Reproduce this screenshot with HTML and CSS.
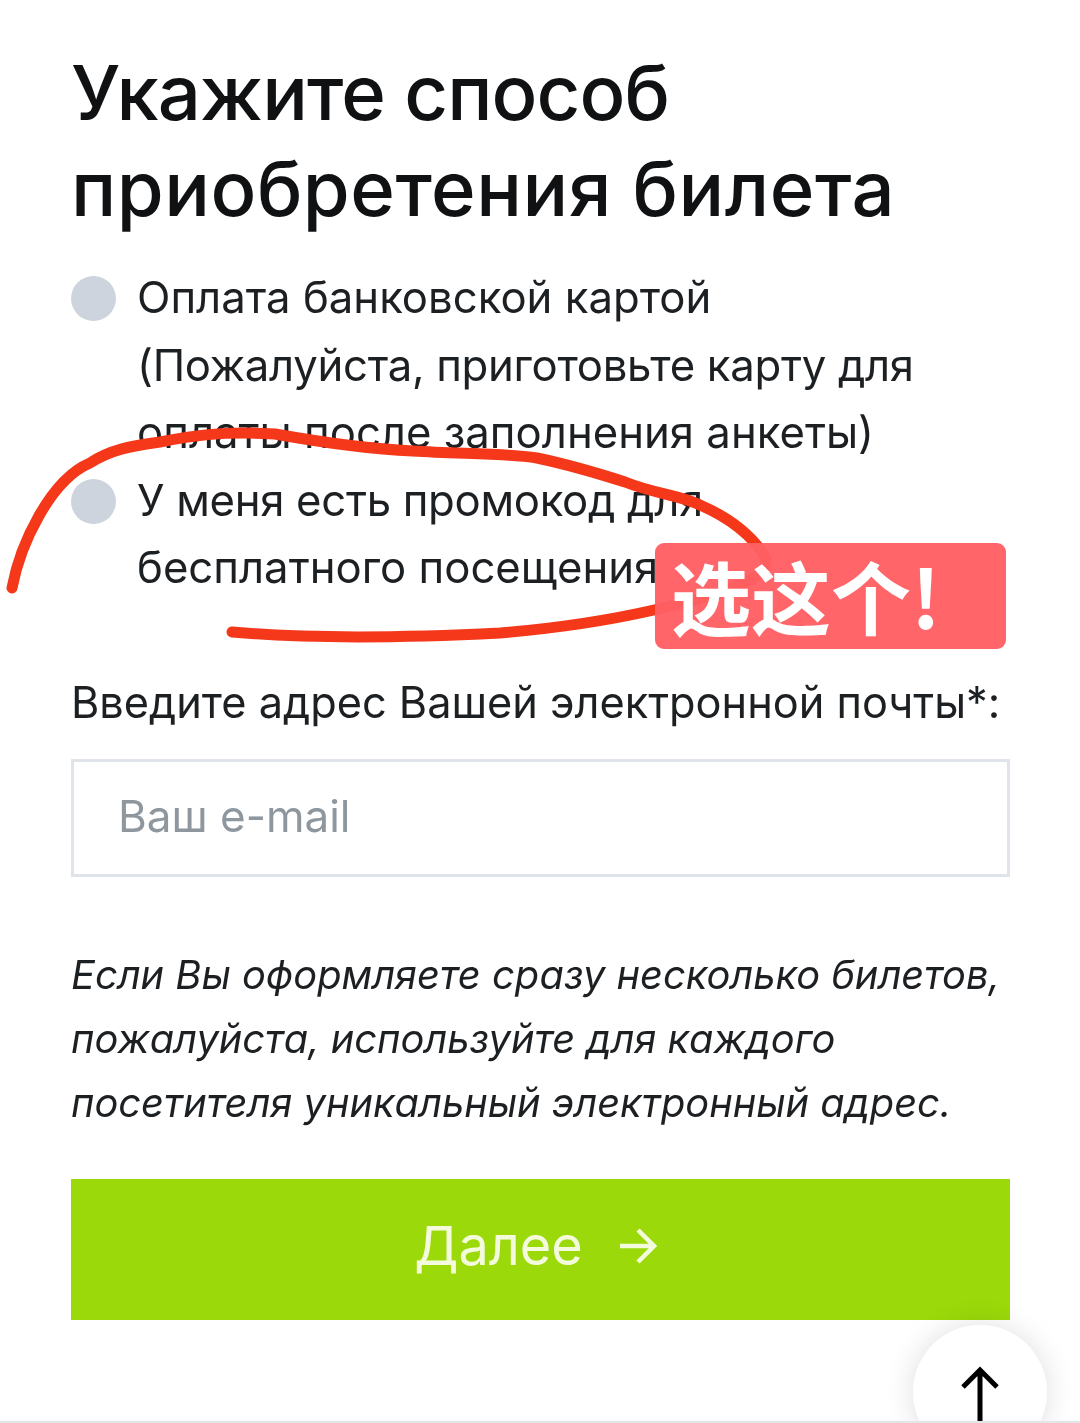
FILE: index.html
```html
<!DOCTYPE html>
<html lang="ru">
<head>
<meta charset="utf-8">
<title>Способ приобретения билета</title>
<link rel="stylesheet" href="styles.css">
</head>
<body>
<main class="page">
  <h1 class="title"><span class="title-a">Укажите способ</span><span class="title-b">приобретения билета</span></h1>
  <div class="options">
    <label class="option"><span class="radio"></span><span>Оплата банковской картой<br><span class="tight">(Пожалуйста, приготовьте карту для</span><br>оплаты после заполнения анкеты)</span></label>
    <label class="option"><span class="radio"></span><span><span class="tight">У меня есть промокод для</span><br>бесплатного посещения</span></label>
  </div>
  <div class="field-label">Введите адрес Вашей электронной почты*:</div>
  <div class="input">Ваш e-mail</div>
  <p class="note">Если Вы оформляете сразу несколько билетов, пожалуйста, используйте для каждого посетителя уникальный электронный адрес.</p>
  <button class="next" type="button">Далее
    <svg class="next-arrow" viewBox="0 0 38 36" width="38" height="36"><path d="M1 18H35M19 2L35 18L19 34"/></svg>
  </button>
  <svg class="scribble" viewBox="0 0 1080 1423" width="1080" height="1423">
    <path d="M12 588C20 545 50 480 90 463C110 450 130 446 160 442C190 436 220 431 275 434C320 442 370 449 413 451C460 454 505 453 537 458C575 466 600 474 625 482C655 494 680 495 700 505C730 518 752 535 766 558C770 580 720 595 654 610C610 620 560 628 500 633C420 637 320 640 232 632"/>
  </svg>
  <div class="badge">选这个!</div>
  <div class="to-top">
    <svg viewBox="0 0 40 60" width="40" height="60"><path d="M20 4V60M3 21L20 4L37 21"/></svg>
  </div>
</main>
</body>
</html>
```
FILE: styles.css
```css
* { box-sizing: border-box; }
html, body { margin: 0; height: 1423px; overflow: hidden; background: #fff; }
.page {
  position: relative;
  width: 1080px;
  height: 1423px;
  padding: 44px 70px 0 71px;
  overflow: hidden;
  font-family: Inter, "Noto Sans", sans-serif;
  color: #16181a;
  border-bottom: 2px solid #e4e5e6;
  filter: blur(0.5px);
}
.title {
  margin: 0;
  font-size: 76px;
  line-height: 96px;
  font-weight: 500;
  color: #0f1113;
}
.title-a, .title-b { display: block; white-space: nowrap; }
.title-a { letter-spacing: -0.9px; }
.title-b { letter-spacing: 0.5px; }
.options { margin-top: 28px; display: flex; flex-direction: column; }
.option { display: flex; gap: 21px; font-size: 43.7px; line-height: 67.5px; color: #1d2023; }
.tight { letter-spacing: -0.3px; }
.radio { flex: none; width: 45px; height: 45px; border-radius: 50%; background: #cdd4de; margin-top: 12px; }
.field-label { margin-top: 66px; font-size: 43.3px; line-height: 68px; color: #1d2023; white-space: nowrap; }
.input {
  margin-top: 23px;
  height: 118px;
  border: 3px solid #dfe3ea;
  padding-left: 44px;
  font-size: 44px;
  line-height: 108px;
  color: #8f979e;
}
.note { margin: 66px 0 0; font-size: 39.8px; line-height: 64px; font-style: italic; color: #1d2023; }
.next {
  display: flex;
  align-items: center;
  justify-content: center;
  gap: 36px;
  width: 100%;
  height: 141px;
  margin-top: 44px;
  border: 0;
  padding: 0 10px 7px 0;
  background: #9bd90a;
  color: #f4fbdc;
  font: 400 54px Inter, "Noto Sans", sans-serif;
}
.next-arrow path { fill: none; stroke: #f4fbdc; stroke-width: 4.5; }
.scribble { position: absolute; left: 0; top: 0; }
.scribble path { fill: none; stroke: #f5371a; stroke-width: 11; stroke-linecap: round; stroke-linejoin: round; }
.badge {
  position: absolute;
  left: 655px;
  top: 543px;
  width: 351px;
  height: 106px;
  padding-left: 16px;
  border-radius: 9px;
  background: rgba(255, 96, 100, 0.97);
  color: #fff;
  font: 700 80px/102px "Noto Sans CJK SC", sans-serif;
  white-space: nowrap;
}
.to-top {
  position: absolute;
  left: 913px;
  top: 1325px;
  width: 134px;
  height: 134px;
  border-radius: 50%;
  background: #fff;
  box-shadow: 0 0 30px rgba(0, 0, 0, 0.13);
  display: flex;
  justify-content: center;
  padding-top: 41px;
}
.to-top svg { display: block; }
.to-top path { fill: none; stroke: #000; stroke-width: 5; }
```
